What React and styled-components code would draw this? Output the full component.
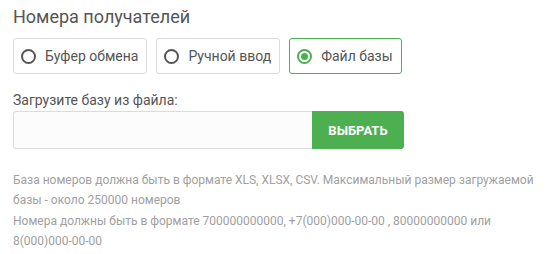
import styled, { createGlobalStyle } from "styled-components"

// ============================== Style ==============================
const GlobalStyle = createGlobalStyle`
    body {
        margin: 0;
        background: #fff;
        font-family: Roboto, "Liberation Sans", Arial, sans-serif;
    }
`

const Page = styled.div`
    padding: 5px 13px 0 13px;
    display: flex;
    flex-direction: column;
    `

const Title = styled.div`
    font-size: 18px;
    line-height: 24px;
    color: #555;
    margin-bottom: 9px;
    `

const RadioRow = styled.div`
    display: flex;
    gap: 9px;
    margin-bottom: 18px;
    `

const RadioBox = styled.label`
    display: flex;
    align-items: center;
    gap: 9px;
    height: 36px;
    box-sizing: border-box;
    padding: 0 8px 0 7px;
    border: 1px solid ${(p) => (p.$active ? "#4caf50" : "#dcdcdc")};
    border-radius: 3px;
    font-size: 14px;
    color: #555;
    cursor: pointer;
    `

const RadioCircle = styled.span`
    width: 15px;
    height: 15px;
    box-sizing: border-box;
    border-radius: 50%;
    border: 2px solid ${(p) => (p.$active ? "#4caf50" : "#555")};
    display: flex;
    align-items: center;
    justify-content: center;

    &::after {
        content: "";
        width: 7px;
        height: 7px;
        border-radius: 50%;
        background: #4caf50;
        display: ${(p) => (p.$active ? "block" : "none")};
    }
    `

const Label = styled.div`
    font-size: 14px;
    line-height: 17px;
    color: #555;
    margin-bottom: 2px;
    `

const UploadRow = styled.div`
    display: flex;
    width: 391px;
    height: 38px;
    margin-bottom: 21px;
    `

const FileInput = styled.div`
    flex: 1;
    box-sizing: border-box;
    border: 1px solid #dcdcdc;
    border-right: none;
    border-radius: 3px 0 0 3px;
    background: #fcfcfc;
    `

const PickButton = styled.button`
    width: 92px;
    border: none;
    border-radius: 0 3px 3px 0;
    background: #4caf50;
    color: #fff;
    font-family: inherit;
    font-size: 13px;
    font-weight: 700;
    cursor: pointer;
    `

const Hint = styled.div`
    font-size: 12px;
    line-height: 20.3px;
    color: #a0a0a0;
    width: 530px;
    `

const options = [
    { id: "clipboard", text: "Буфер обмена" },
    { id: "manual", text: "Ручной ввод" },
    { id: "file", text: "Файл базы" },
]

export default function App() {
    const selected = "file"

    return (
        <>
            <GlobalStyle />
            <Page>
                <Title>Номера получателей</Title>

                <RadioRow>
                    {options.map((o) => (
                        <RadioBox key={o.id} $active={o.id === selected}>
                            <RadioCircle $active={o.id === selected} />
                            {o.text}
                        </RadioBox>
                    ))}
                </RadioRow>

                <Label>Загрузите базу из файла:</Label>
                <UploadRow>
                    <FileInput />
                    <PickButton>ВЫБРАТЬ</PickButton>
                </UploadRow>

                <Hint>
                    База номеров должна быть в формате XLS, XLSX, CSV. Максимальный размер загружаемой базы - около 250000 номеров
                </Hint>
                <Hint>
                    Номера должны быть в формате 700000000000, +7(000)000-00-00 , 80000000000 или 8(000)000-00-00
                </Hint>
            </Page>
        </>
    )
}
